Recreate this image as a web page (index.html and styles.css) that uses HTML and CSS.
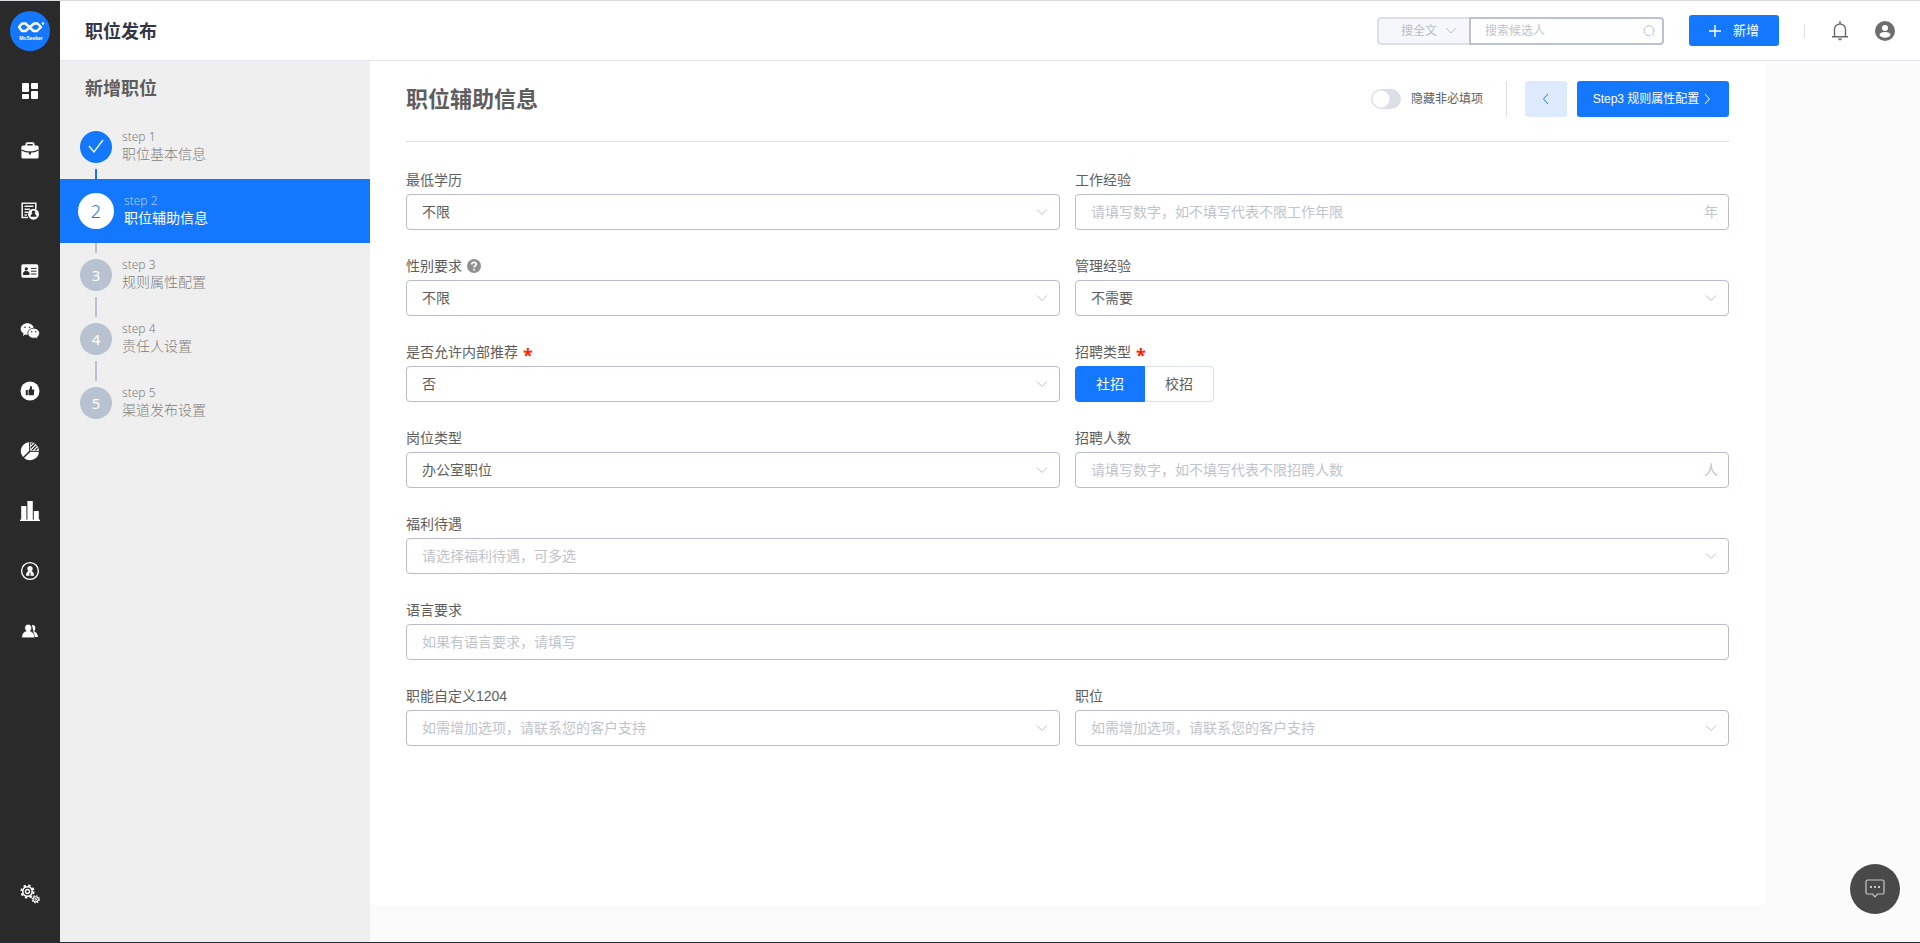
FILE: index.html
```html
<!DOCTYPE html>
<html lang="zh-CN">
<head>
<meta charset="utf-8">
<meta name="viewport" content="width=device-width, initial-scale=1">
<title>职位发布</title>
<link rel="stylesheet" href="styles.css">
</head>
<body>
<div class="app">
  <nav class="rail" aria-label="主导航">
    <a class="logo" href="#" aria-label="MoSeeker">
      <svg viewBox="0 0 40 40" width="40" height="40">
        <circle cx="20" cy="20" r="20" fill="#1478ff"/>
        <path d="M9 16l3-3.500h3.500l8 7.500H27l4-4-3.500-3.500H24L15.500 20H12z" fill="none" stroke="#fff" stroke-width="2.400" stroke-linejoin="round" stroke-linecap="round"/>
        <circle cx="33" cy="12.500" r="1.200" fill="#fff"/>
        <text class="logo-text" x="21" y="29" text-anchor="middle">MoSeeker</text>
      </svg>
    </a>
    <a class="rail-item" href="#" aria-label="概览">
      <svg viewBox="0 0 20 20" width="20" height="20" fill="#fff"><rect x="2" y="2" width="7" height="9" rx="1"/><rect x="11" y="2" width="7" height="6" rx="1"/><rect x="2" y="13" width="7" height="5" rx="1"/><rect x="11" y="10" width="7" height="8" rx="1"/></svg>
    </a>
    <a class="rail-item" href="#" aria-label="职位">
      <svg viewBox="0 0 20 20" width="20" height="20"><path d="M5.500 4.500V3A1.700 1.700 0 0 1 7.200 1.300h5.600A1.700 1.700 0 0 1 14.500 3v1.500H17a1.600 1.600 0 0 1 1.600 1.600V16A1.600 1.600 0 0 1 17 17.600H3A1.600 1.600 0 0 1 1.400 16V6.100A1.600 1.600 0 0 1 3 4.500zM7.300 4.500h5.400V3H7.300z" fill="#fff"/><path d="M1.400 9Q10 13.400 18.600 9" fill="none" stroke="#2a2a2a" stroke-width="1.200"/><rect x="9" y="10.400" width="2" height="3.400" rx="1" fill="#2a2a2a"/></svg>
    </a>
    <a class="rail-item" href="#" aria-label="简历">
      <svg viewBox="0 0 20 20" width="20" height="20"><path d="M8 16.500H2.200V2.200h13.600V8M4.500 5.200h9M4.500 8.200H10M4.500 11.200h4M4.500 14h2.500" fill="none" stroke="#eee" stroke-width="1.600"/><circle cx="13.500" cy="13.200" r="5.500" fill="#fff"/><path d="M13.500 9.500a1.800 1.800 0 0 1 1 3.300c1.300.4 2 1.500 2 3h-6c0-1.500.7-2.600 2-3a1.800 1.800 0 0 1 1-3.300z" fill="#2a2a2a"/></svg>
    </a>
    <a class="rail-item" href="#" aria-label="人才">
      <svg viewBox="0 0 20 20" width="20" height="20"><rect x="1.300" y="3.300" width="17" height="13.400" rx="1.600" fill="#fff"/><circle cx="6.300" cy="7.800" r="1.600" fill="#2a2a2a"/><path d="M3.400 13.500c0-2.200 1-3.200 2.900-3.200s2.900 1 2.900 3.200zM11 7.400h5.500M11 10.200h5.500M11 13h5.500" stroke="#2a2a2a" stroke-width="1" fill="#2a2a2a"/></svg>
    </a>
    <a class="rail-item" href="#" aria-label="微信">
      <svg viewBox="0 0 20 20" width="20" height="20"><path d="M7.300 2.300c3.800 0 6.600 2.500 6.600 5.600s-2.800 5.800-6.600 5.800a8 8 0 0 1-2-.3L2.900 15l.6-2.600C1.800 11.300.7 9.700.7 8c0-3.200 2.900-5.700 6.600-5.700z" fill="#fff"/><path d="M13.700 7.200c3.200 0 5.900 2.200 5.900 5 0 1.500-.9 2.900-2.200 3.800l.5 2-2.200-1.100a8 8 0 0 1-2 .3c-3.300 0-5.900-2.200-5.900-5s2.600-5 5.900-5z" fill="#fff" stroke="#2a2a2a" stroke-width=".8"/><g fill="#2a2a2a"><circle cx="5" cy="6.300" r=".8"/><circle cx="9.500" cy="6.300" r=".8"/><circle cx="11.700" cy="10.700" r=".7"/><circle cx="15.700" cy="10.700" r=".7"/></g></svg>
    </a>
    <a class="rail-item" href="#" aria-label="推荐">
      <svg viewBox="0 0 20 20" width="20" height="20"><circle cx="10" cy="10" r="9.500" fill="#fff"/><path d="M5.800 9h2v5.200h-2zM8.500 9.200l1.300-1.500.4-2.500c1.600-.5 2.200 1 1.600 3.200h2.500l-.5 5.800H8.500z" fill="#2a2a2a"/></svg>
    </a>
    <a class="rail-item" href="#" aria-label="分析">
      <svg viewBox="0 0 20 20" width="20" height="20"><path d="M9 1.200V10l-6 6A9 9 0 0 1 9 1.200zM10.200 11h8.700a9 9 0 0 1-14.900 6z" fill="#fff"/><path d="M10.500 2l-.3.300M13.500 2.300l-3.300 3.400M15.800 3.600L10.600 9M17.500 5.500L13.300 9.700M18.500 8l-1.700 1.800" stroke="#fff" stroke-width="1.100"/><path d="M10.300 1.500a8.500 8.500 0 0 1 8.300 8.200h-8.300z" fill="none" stroke="#fff" stroke-width=".7"/></svg>
    </a>
    <a class="rail-item" href="#" aria-label="报表">
      <svg viewBox="0 0 20 20" width="20" height="20" fill="#fff"><path d="M0 18.600h20V20H0z"/><rect x="1.200" y="5" width="5.200" height="14" rx=".6"/><rect x="7.400" y="0" width="5.400" height="19" rx=".6"/><rect x="13.800" y="10" width="5" height="9" rx=".6"/></svg>
    </a>
    <a class="rail-item" href="#" aria-label="员工">
      <svg viewBox="0 0 20 20" width="20" height="20"><circle cx="10" cy="10" r="8.400" fill="none" stroke="#fff" stroke-width="1.400"/><path d="M10 5a2.700 2.700 0 0 1 1.600 4.900c1.500.7 2.400 2.300 2.400 4.800H6c0-2.500.9-4.100 2.400-4.800A2.700 2.700 0 0 1 10 5z" fill="#fff"/><path d="M10 10.800l.9 3.700H9.100z" fill="#2a2a2a"/></svg>
    </a>
    <a class="rail-item" href="#" aria-label="用户">
      <svg viewBox="0 0 20 20" width="20" height="20" fill="#fff"><path d="M12 4c2.600-.3 3.600 1.400 3.300 3.500-.1 1.300-.7 2-1.300 2.800 2 1 3.600 2.500 4 5.700h-3.500"/><path d="M8.200 3.300a3.300 3.300 0 0 1 3.400 3.500c0 1.500-.5 2.600-1.400 3.300 2.700.8 4.400 2.700 4.600 6.700H1.700c.1-4 1.700-5.900 4.500-6.700-.9-.7-1.400-1.800-1.400-3.300a3.300 3.300 0 0 1 3.400-3.500z" stroke="#2a2a2a" stroke-width=".6"/></svg>
    </a>
    <a class="rail-item rail-settings" href="#" aria-label="设置">
      <svg viewBox="0 0 20 20" width="20" height="20" fill="none" stroke="#fff"><circle cx="7.500" cy="7.500" r="6.200" stroke-width="1.800" stroke-dasharray="2.430 2.440"/><circle cx="7.500" cy="7.500" r="4.700" stroke-width="1.600"/><circle cx="7.500" cy="7.500" r="2" stroke-width="1.300"/><circle cx="15.700" cy="15.300" r="3.600" stroke-width="1.200" stroke-dasharray="1.410 1.420"/><circle cx="15.700" cy="15.300" r="2.600" stroke-width="1.100"/><circle cx="15.700" cy="15.300" r=".9" stroke-width="1"/></svg>
    </a>
  </nav>

  <div class="page">
    <header class="topbar">
      <h1 class="topbar-title">职位发布</h1>
      <div class="topbar-tools">
        <form class="search" role="search">
          <div class="search-scope">
            <select class="scope-select" aria-label="搜索范围"><option>搜全文</option></select>
            <svg class="scope-arrow" viewBox="0 0 12 12" width="12" height="12"><path d="M1 3l5 5 5-5" fill="none" stroke="#b8bfcc"/></svg>
          </div>
          <div class="search-box">
            <input class="search-input" type="text" placeholder="搜索候选人" aria-label="搜索候选人">
            <svg class="search-icon" viewBox="0 0 14 14" width="14" height="14"><path d="M8.500 11.500a5 5 0 1 1 2-1.200l1.500 1.500" fill="none" stroke="#b8bfcc"/></svg>
          </div>
        </form>
        <button class="btn btn-new" type="button">
          <svg viewBox="0 0 12 12" width="12" height="12"><path d="M6 0v12M0 6h12" stroke="#fff" stroke-width="1.400"/></svg>新增
        </button>
        <span class="topbar-rule"></span>
        <button class="icon-btn" type="button" aria-label="通知">
          <svg viewBox="0 0 20 20" width="20" height="20"><path d="M4.500 15.500V8.500a5.500 5.500 0 0 1 11 0v7M2 15.800h16M10 0v3" fill="none" stroke="#6b6b6b" stroke-width="1.400"/><path d="M8 17.600h4a2 1.800 0 0 1-4 0z" fill="#6b6b6b"/></svg>
        </button>
        <button class="icon-btn icon-user" type="button" aria-label="账户">
          <svg viewBox="0 0 20 20" width="20" height="20"><circle cx="10" cy="10" r="10" fill="#6e6e6e"/><circle cx="10" cy="7" r="3" fill="#fff"/><path d="M4.500 14c0-2 2-3 5.500-3s5.500 1 5.500 3c-1 1.800-3 2.800-5.500 2.800S5.500 15.800 4.500 14z" fill="#fff"/></svg>
        </button>
      </div>
    </header>

    <div class="body">
      <aside class="steps-panel">
        <h2 class="steps-title">新增职位</h2>
        <ol class="steps">
          <li class="step step-done"><span class="step-dot"><svg viewBox="0 0 16 16" width="16" height="16"><path d="M1 7l5 6 9-12" fill="none" stroke="#fff" stroke-width="1.300"/></svg></span><span class="step-copy"><span class="step-no">step 1</span><span class="step-name">职位基本信息</span></span></li>
          <li class="step step-active"><span class="step-dot">2</span><span class="step-copy"><span class="step-no">step 2</span><span class="step-name">职位辅助信息</span></span></li>
          <li class="step"><span class="step-dot">3</span><span class="step-copy"><span class="step-no">step 3</span><span class="step-name">规则属性配置</span></span></li>
          <li class="step"><span class="step-dot">4</span><span class="step-copy"><span class="step-no">step 4</span><span class="step-name">责任人设置</span></span></li>
          <li class="step"><span class="step-dot">5</span><span class="step-copy"><span class="step-no">step 5</span><span class="step-name">渠道发布设置</span></span></li>
        </ol>
      </aside>

      <main class="main">
        <div class="main-head">
          <h2 class="main-title">职位辅助信息</h2>
          <label class="toggle"><input class="switch" type="checkbox" role="switch">隐藏非必填项</label>
          <span class="head-rule"></span>
          <button class="btn btn-back" type="button" aria-label="上一步"><svg viewBox="0 0 12 12" width="12" height="12"><path d="M8 1L3.500 6 8 11" fill="none" stroke="#1478ff"/></svg></button>
          <button class="btn btn-next" type="button">Step3 规则属性配置<svg viewBox="0 0 12 12" width="12" height="12"><path d="M4 1l4.500 5L4 11" fill="none" stroke="#fff"/></svg></button>
        </div>

        <form class="form">
          <div class="field">
            <label class="label" for="edu">最低学历</label>
            <div class="control"><select class="input" id="edu"><option>不限</option></select><svg class="arrow" viewBox="0 0 12 12" width="12" height="12"><path d="M1 3.500l5 5 5-5"/></svg></div>
          </div>
          <div class="field">
            <label class="label" for="exp">工作经验</label>
            <div class="control"><input class="input" id="exp" type="text" placeholder="请填写数字，如不填写代表不限工作年限"><span class="unit">年</span></div>
          </div>
          <div class="field">
            <div class="label"><label for="gender">性别要求</label><svg viewBox="0 0 14 14" width="14" height="14"><circle cx="7" cy="7" r="7" fill="#909090"/><path d="M4.800 5.500c0-3 4.500-2.800 4.500-.2 0 1.500-2.200 1.500-2.200 3.200M7.100 9.700v1.800" fill="none" stroke="#fff" stroke-width="1.700"/></svg></div>
            <div class="control"><select class="input" id="gender"><option>不限</option></select><svg class="arrow" viewBox="0 0 12 12" width="12" height="12"><path d="M1 3.500l5 5 5-5"/></svg></div>
          </div>
          <div class="field">
            <label class="label" for="manage">管理经验</label>
            <div class="control"><select class="input" id="manage"><option>不需要</option></select><svg class="arrow" viewBox="0 0 12 12" width="12" height="12"><path d="M1 3.500l5 5 5-5"/></svg></div>
          </div>
          <div class="field">
            <label class="label" for="refer">是否允许内部推荐<span class="required">*</span></label>
            <div class="control"><select class="input" id="refer"><option>否</option></select><svg class="arrow" viewBox="0 0 12 12" width="12" height="12"><path d="M1 3.500l5 5 5-5"/></svg></div>
          </div>
          <div class="field" role="radiogroup" aria-labelledby="hire-label">
            <div class="label" id="hire-label">招聘类型<span class="required">*</span></div>
            <div class="segments">
              <label class="segment"><input class="segment-radio" type="radio" name="hire" checked>社招</label>
              <label class="segment"><input class="segment-radio" type="radio" name="hire">校招</label>
            </div>
          </div>
          <div class="field">
            <label class="label" for="post">岗位类型</label>
            <div class="control"><select class="input" id="post"><option>办公室职位</option></select><svg class="arrow" viewBox="0 0 12 12" width="12" height="12"><path d="M1 3.500l5 5 5-5"/></svg></div>
          </div>
          <div class="field">
            <label class="label" for="count">招聘人数</label>
            <div class="control"><input class="input" id="count" type="text" placeholder="请填写数字，如不填写代表不限招聘人数"><span class="unit">人</span></div>
          </div>
          <div class="field field-wide">
            <label class="label" for="welfare">福利待遇</label>
            <div class="control"><select class="input input-empty" id="welfare"><option>请选择福利待遇，可多选</option></select><svg class="arrow" viewBox="0 0 12 12" width="12" height="12"><path d="M1 3.500l5 5 5-5"/></svg></div>
          </div>
          <div class="field field-wide">
            <label class="label" for="lang">语言要求</label>
            <div class="control"><input class="input" id="lang" type="text" placeholder="如果有语言要求，请填写"></div>
          </div>
          <div class="field">
            <label class="label" for="custom">职能自定义1204</label>
            <div class="control"><select class="input input-empty" id="custom"><option>如需增加选项，请联系您的客户支持</option></select><svg class="arrow" viewBox="0 0 12 12" width="12" height="12"><path d="M1 3.500l5 5 5-5"/></svg></div>
          </div>
          <div class="field">
            <label class="label" for="position">职位</label>
            <div class="control"><select class="input input-empty" id="position"><option>如需增加选项，请联系您的客户支持</option></select><svg class="arrow" viewBox="0 0 12 12" width="12" height="12"><path d="M1 3.500l5 5 5-5"/></svg></div>
          </div>
        </form>
      </main>
    </div>
  </div>
</div>
<button class="chat" type="button" aria-label="在线客服">
  <svg viewBox="0 0 20 20" width="20" height="20"><path d="M2.500 0h15A1.500 1.500 0 0 1 19 1.500v11a1.500 1.500 0 0 1-1.500 1.500h-5L10 16.800 7.500 14h-5A1.500 1.500 0 0 1 1 12.500v-11A1.500 1.500 0 0 1 2.500 0z" transform="translate(0 1)" fill="none" stroke="#c8c8c8" stroke-width="1.200"/><path d="M5 8h2M9 8h2M13 8h2" stroke="#c8c8c8" stroke-width="2"/></svg>
</button>
</body>
</html>
```
FILE: styles.css
```css
* { box-sizing: border-box; }

body {
  margin: 0;
  background: #fbfbfb;
  color: #5e5e5e;
  font-family: "Liberation Sans", "Noto Sans CJK SC", sans-serif;
  font-size: 14px;
  line-height: 20px;
}

button, input, select { font: inherit; color: inherit; margin: 0; }
button { border: 0; padding: 0; cursor: pointer; }
h1, h2 { margin: 0; font-size: 18px; line-height: 26px; font-weight: 700; }
svg { display: block; flex: none; }
::placeholder { color: #c0c4cc; opacity: 1; }

.app {
  display: flex;
  min-height: 100vh;
  border-top: 1px solid #dadce0;
  border-bottom: 1px solid #20303a;
}

/* Icon rail */
.rail {
  display: flex;
  flex-direction: column;
  flex: none;
  width: 60px;
  padding-bottom: 18px;
  background: #2a2a2a;
}
.logo { padding: 10px; }
.logo-text { font-size: 5px; font-weight: 700; fill: #fff; }
.rail-item {
  display: flex;
  align-items: center;
  justify-content: center;
  height: 60px;
}
.rail-settings { margin-top: auto; }

.page { display: flex; flex-direction: column; flex: 1; min-width: 0; }

/* Top bar */
.topbar {
  display: flex;
  align-items: center;
  justify-content: space-between;
  height: 60px;
  padding: 0 25px;
  background: #fff;
  border-bottom: 1px solid #e6e6ee;
}
.topbar-title { padding-top: 2px; color: #333644; }
.topbar-tools { display: flex; align-items: center; font-size: 12px; }
.search { display: flex; width: 287px; height: 28px; }
.search-scope { position: relative; width: 92px; }
.scope-select {
  appearance: none;
  width: 100%;
  height: 100%;
  padding: 0 0 0 22px;
  border: 2px solid #dcdfe6;
  border-right: 0;
  border-radius: 4px 0 0 4px;
  background: #f5f7fa;
  color: #b8bdc9;
}
.scope-arrow { position: absolute; right: 12px; top: 8px; pointer-events: none; }
.search-box { position: relative; flex: 1; }
.search-input {
  width: 100%;
  height: 100%;
  padding: 0 30px 0 14px;
  border: 2px solid #b8c2d1;
  border-radius: 0 4px 4px 0;
  background: #fff;
}
.search-icon { position: absolute; right: 8px; top: 7px; pointer-events: none; }

.btn {
  display: flex;
  align-items: center;
  justify-content: center;
  border-radius: 3px;
  background: #1478ff;
  color: #fff;
}
.btn-new { gap: 12px; width: 90px; height: 31px; margin-left: 25px; font-size: 13px; }
.topbar-rule { width: 1px; height: 14px; margin: 0 25px; background: #dcdfe6; }
.icon-btn { background: none; }
.icon-user { margin-left: 25px; }

.body { display: flex; flex: 1; align-items: stretch; }

/* Steps */
.steps-panel { flex: none; width: 310px; padding-top: 15px; background: #efefef; }
.steps-title { padding-left: 25px; }
.steps { list-style: none; margin: 13px 0 0; padding: 0; color: #808080; }
.step {
  position: relative;
  display: flex;
  align-items: center;
  gap: 10px;
  height: 64px;
  padding-left: 20px;
}
.step:not(.step-active):not(:first-child)::before,
.step:not(.step-active):not(:last-child)::after {
  content: "";
  position: absolute;
  left: 35px;
  width: 2px;
  height: 10px;
  background: #b8c2d1;
}
.step::before { top: 0; }
.step::after { bottom: 0; }
.step.step-done:not(:last-child)::after { background: #1478ff; }
.step-dot {
  display: flex;
  align-items: center;
  justify-content: center;
  width: 32px;
  height: 32px;
  border-radius: 50%;
  background: #b8c2d1;
  color: #fff;
  font-family: "Noto Sans", sans-serif;
  font-size: 15px;
}
.step-copy { display: flex; flex-direction: column; padding-bottom: 3px; font-weight: 300; }
.step-no { font-family: "Noto Sans", sans-serif; font-size: 12px; line-height: 16px; }
.step-name { line-height: 18px; }
.step-done .step-dot { background: #1478ff; }
.step-active { padding-left: 18px; background: #1478ff; color: #fff; }
.step-active .step-dot { width: 36px; height: 36px; background: #fff; color: #1478ff; font-size: 18px; font-weight: 300; }
.step-active .step-no { color: #a8cdff; }
.step-active .step-name { font-weight: 400; }

/* Main form */
.main {
  flex: 1;
  min-width: 0;
  margin: 0 155px 37px 0;
  padding: 20px 36px 36px;
  background: #fff;
}
.main-head {
  display: flex;
  align-items: center;
  padding-bottom: 24px;
  border-bottom: 1px solid #dddfe2;
  font-size: 12px;
}
.main-title { margin-right: auto; padding-top: 2px; font-size: 22px; line-height: 34px; }
.toggle { display: flex; align-items: center; gap: 10px; }
.switch {
  appearance: none;
  width: 30px;
  height: 20px;
  border-radius: 10px;
  background: radial-gradient(circle at 10px 10px, #fff 8px, #dcdfe6 9px);
}
.head-rule { width: 1px; height: 36px; margin: 0 18px 0 23px; background: #dcdfe6; }
.btn-back { width: 42px; height: 36px; background: #deebff; }
.btn-next { gap: 2px; width: 152px; height: 36px; margin-left: 10px; }

.form {
  display: grid;
  grid-template-columns: 1fr 1fr;
  gap: 26px 15px;
  padding-top: 28px;
}
.field-wide { grid-column: 1 / -1; }
.label { display: flex; align-items: center; gap: 5px; height: 24px; padding-bottom: 4px; }
.required { color: #ff2600; font-size: 18px; line-height: 16px; height: 10px; font-weight: 700; font-family: "Noto Sans", sans-serif; }
.control { position: relative; }
.input {
  display: block;
  appearance: none;
  width: 100%;
  height: 36px;
  padding: 0 40px 0 15px;
  border: 1px solid #b8bccc;
  border-radius: 4px;
  background: #fff;
}
.input-empty { color: #c0c4cc; }
.arrow {
  position: absolute;
  right: 12px;
  top: 12px;
  pointer-events: none;
  fill: none;
  stroke: #bcc0cc;
}
.unit { position: absolute; right: 11px; top: 8px; color: #c0c4cc; }
.segments { display: flex; }
.segment {
  display: flex;
  align-items: center;
  justify-content: center;
  width: 70px;
  height: 36px;
  border: 1px solid #dcdfe6;
}
.segment:first-child { border-radius: 4px 0 0 4px; }
.segment:last-child { width: 69px; border-radius: 0 4px 4px 0; border-left: 0; }
.segment:has(:checked) { background: #1478ff; border-color: #1478ff; color: #fff; }
.segment-radio { appearance: none; width: 0; height: 0; }

.chat {
  position: fixed;
  right: 20px;
  bottom: 29px;
  display: flex;
  align-items: center;
  justify-content: center;
  width: 50px;
  height: 50px;
  border-radius: 50%;
  background: #494949;
}
```
